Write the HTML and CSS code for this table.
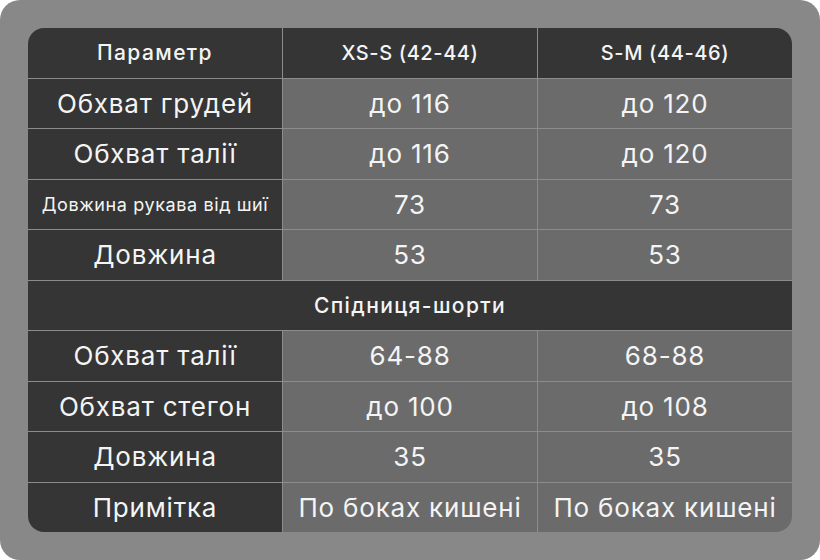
FILE: index.html
```html
<!DOCTYPE html>
<html lang="uk">
<head>
<meta charset="utf-8">
<link rel="stylesheet" href="styles.css">
</head>
<body>
<div class="frame">
  <div class="table">
    <div class="cell head wide">Параметр</div>
    <div class="cell head">XS-S (42-44)</div>
    <div class="cell head">S-M (44-46)</div>

    <div class="cell label">Обхват грудей</div>
    <div class="cell val">до 116</div>
    <div class="cell val">до 120</div>

    <div class="cell label">Обхват талії</div>
    <div class="cell val">до 116</div>
    <div class="cell val">до 120</div>

    <div class="cell label small">Довжина рукава від шиї</div>
    <div class="cell val">73</div>
    <div class="cell val">73</div>

    <div class="cell label">Довжина</div>
    <div class="cell val">53</div>
    <div class="cell val">53</div>

    <div class="cell head wide section">Спідниця-шорти</div>

    <div class="cell label">Обхват талії</div>
    <div class="cell val">64-88</div>
    <div class="cell val">68-88</div>

    <div class="cell label">Обхват стегон</div>
    <div class="cell val">до 100</div>
    <div class="cell val">до 108</div>

    <div class="cell label">Довжина</div>
    <div class="cell val">35</div>
    <div class="cell val">35</div>

    <div class="cell label">Примітка</div>
    <div class="cell val">По боках кишені</div>
    <div class="cell val">По боках кишені</div>
  </div>
</div>
</body>
</html>
```
FILE: styles.css
```css
html, body {
  margin: 0;
  padding: 0;
  background: #ffffff;
}
body {
  width: 820px;
  height: 560px;
  font-family: Inter, "Liberation Sans", sans-serif;
}
.frame {
  width: 820px;
  height: 560px;
  box-sizing: border-box;
  padding: 28px;
  background: #888888;
  border-radius: 20px;
}
.table {
  display: grid;
  grid-template-columns: 254px 254px 254px;
  grid-auto-rows: 49.5px;
  gap: 1px;
  background: #8c8c8c;
  border-radius: 16px;
  overflow: hidden;
  height: 504px;
}
.cell {
  display: flex;
  align-items: center;
  justify-content: center;
  color: #f4f4f4;
  white-space: nowrap;
}
.head {
  background: #353535;
  font-size: 20px;
  font-weight: 500;
  letter-spacing: 0.6px;
}
.head.wide {
  font-size: 21px;
  letter-spacing: 1.4px;
}
.section {
  grid-column: 1 / 4;
}
.label {
  background: #353535;
  font-size: 26px;
  letter-spacing: 0.8px;
}
.label.small {
  font-size: 18px;
  letter-spacing: 0.6px;
}
.val {
  background: #6b6b6b;
  font-size: 26px;
  letter-spacing: 0.8px;
}
```
